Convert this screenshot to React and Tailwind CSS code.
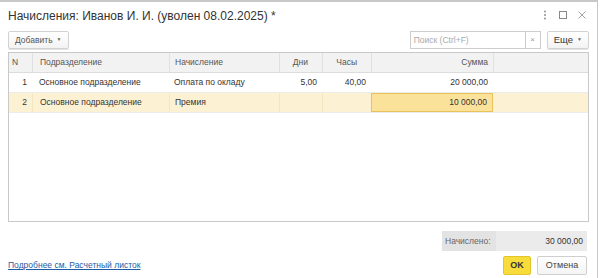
import React from "react";

const cols = "grid-cols-[23px_137px_110px_43px_49px_122px_1fr]";

const rows = [
  { n: 1, dep: "Основное подразделение", acc: "Оплата по окладу", days: "5,00", hours: "40,00", sum: "20 000,00" },
  { n: 2, dep: "Основное подразделение", acc: "Премия", days: "", hours: "", sum: "10 000,00", active: true },
];

function Caret() {
  return <span className="ml-[4px] text-[5px] text-[#666] relative top-[0px]">▼</span>;
}

export default function App() {
  return (
    <div className="w-[600px] h-[278px] bg-white overflow-hidden font-['Liberation_Sans',Arial,sans-serif] text-[#333] whitespace-nowrap">
      <div className="w-[598px] h-[278px] border-t-2 border-r border-[#c8c8c8] flex flex-col">
        {/* title */}
        <div className="h-[26px] flex items-center pl-2 pr-2">
          <div className="text-[12px] text-[#333] leading-none pt-[1px]">Начисления: Иванов И. И. (уволен 08.02.2025) *</div>
          <div className="ml-auto flex items-center pr-[2px]">
            <svg width="4" height="10" viewBox="0 0 4 10"><circle cx="2" cy="1.5" r="0.9" fill="#888" /><circle cx="2" cy="5" r="0.9" fill="#888" /><circle cx="2" cy="8.5" r="0.9" fill="#888" /></svg>
            <svg width="10" height="10" viewBox="0 0 10 10" className="ml-[11px]"><rect x="1.5" y="1.5" width="7" height="7" fill="none" stroke="#888" strokeWidth="1" /></svg>
            <svg width="10" height="10" viewBox="0 0 10 10" className="ml-[9px]"><path d="M1.5 1.5 L8.5 8.5 M8.5 1.5 L1.5 8.5" stroke="#999" strokeWidth="0.9" /></svg>
          </div>
        </div>

        {/* toolbar */}
        <div className="h-[24px] flex items-center px-2">
          <button className="h-[18px] px-[6px] border border-[#d2d2d2] rounded-[2px] bg-gradient-to-b from-white to-[#f3f3f3] text-[8.5px] text-[#555] flex items-center shadow-[0_1px_0_#e4e4e4]">
            Добавить<Caret />
          </button>
          <div className="ml-auto flex items-center">
            <div className="w-[116px] h-[18px] border border-[#cdcdcd] bg-white text-[8.5px] text-[#aaa] flex items-center pl-[3px]">Поиск (Ctrl+F)</div>
            <div className="w-[15px] h-[18px] border border-l-0 border-[#cdcdcd] bg-white text-[8px] text-[#999] flex items-center justify-center">×</div>
            <button className="ml-[6px] h-[18px] px-[6px] border border-[#d2d2d2] rounded-[2px] bg-gradient-to-b from-white to-[#f3f3f3] text-[9.5px] text-[#333] flex items-center shadow-[0_1px_0_#e4e4e4]">
              Еще<Caret />
            </button>
          </div>
        </div>

        {/* table */}
        <div className="mx-2 h-[170px] border border-[#c9c9c9] bg-white text-[8.5px]">
          <div className={`grid ${cols} h-[20px] bg-[#f2f2f2] border-b border-[#dcdcdc] text-[#555]`}>
            <div className="flex items-center pl-[3px]">N</div>
            <div className="flex items-center pl-[7px] border-l border-[#e0e0e0]">Подразделение</div>
            <div className="flex items-center pl-[5px] border-l border-[#e0e0e0]">Начисление</div>
            <div className="flex items-center justify-end pr-[14px] border-l border-[#e0e0e0]">Дни</div>
            <div className="flex items-center justify-end pr-[14px] border-l border-[#e0e0e0]">Часы</div>
            <div className="flex items-center justify-end pr-[5px] border-l border-[#e0e0e0]">Сумма</div>
            <div className="border-l border-[#e0e0e0]" />
          </div>
          {rows.map((r) => (
            <div key={r.n} className={`grid ${cols} h-[20px] border-b border-[#ececec] ${r.active ? "bg-[#fcf2d3]" : "bg-white"}`}>
              <div className="flex items-center justify-end pr-[5px]">{r.n}</div>
              <div className={`flex items-center pl-[7px] ${r.active ? "border-l border-[#f3e7c2]" : ""}`}>{r.dep}</div>
              <div className={`flex items-center pl-[5px] ${r.active ? "border-l border-[#f3e7c2]" : ""}`}>{r.acc}</div>
              <div className={`flex items-center justify-end pr-[5px] ${r.active ? "border-l border-[#f3e7c2]" : ""}`}>{r.days}</div>
              <div className={`flex items-center justify-end pr-[5px] ${r.active ? "border-l border-[#f3e7c2]" : ""}`}>{r.hours}</div>
              <div className={`flex items-center justify-end pr-[5px] ${r.active ? "bg-[#fbe29b] border border-[#e9c35a]" : ""}`}>{r.sum}</div>
              <div />
            </div>
          ))}
        </div>

        {/* total */}
        <div className="flex justify-end pr-[10px] mt-[9px]">
          <div className="w-[145px] h-[20px] bg-[#e3e3e3] flex items-center text-[8.5px]">
            <div className="pl-[3px] text-[#666] w-[54px]">Начислено:</div>
            <div className="flex-1 h-full bg-[#ebebeb] flex items-center justify-end pr-[4px] text-[#333]">30 000,00</div>
          </div>
        </div>

        {/* bottom */}
        <div className="flex items-end px-2 mt-[5px]">
          <a href="#" className="text-[8.5px] text-[#1f5aa6] underline mb-[3px]">Подробнее см. Расчетный листок</a>
          <div className="ml-auto flex items-center gap-[6px] pr-[2px]">
            <button className="h-[19px] w-[28px] bg-[#f7dc3b] border border-[#e1c52a] rounded-[2px] text-[9px] font-bold text-[#333] flex items-center justify-center">OK</button>
            <button className="h-[19px] w-[50px] bg-gradient-to-b from-white to-[#f4f4f4] border border-[#cfcfcf] rounded-[2px] text-[9px] text-[#444] flex items-center justify-center">Отмена</button>
          </div>
        </div>
      </div>
    </div>
  );
}
